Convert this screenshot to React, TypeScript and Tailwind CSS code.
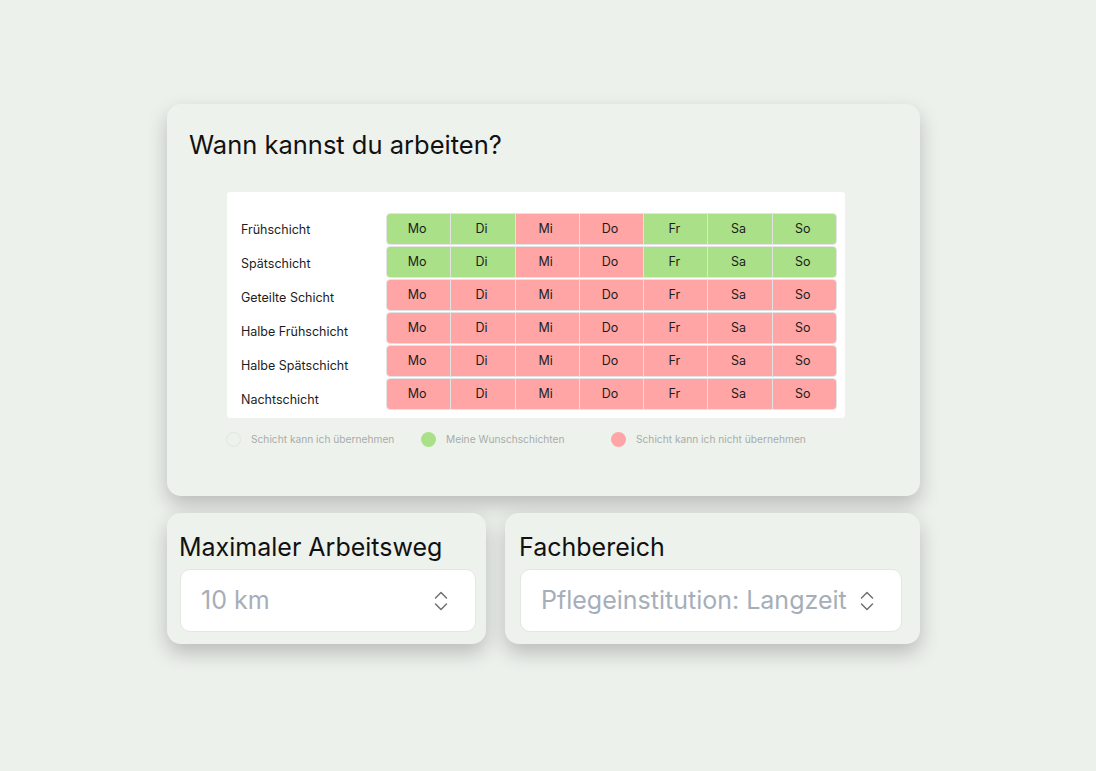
import React from "react";

type Cell = "yes" | "no";

const days = ["Mo", "Di", "Mi", "Do", "Fr", "Sa", "So"];

const shifts: { name: string; pattern: Cell[] }[] = [
  { name: "Frühschicht", pattern: ["yes", "yes", "no", "no", "yes", "yes", "yes"] },
  { name: "Spätschicht", pattern: ["yes", "yes", "no", "no", "yes", "yes", "yes"] },
  { name: "Geteilte Schicht", pattern: ["no", "no", "no", "no", "no", "no", "no"] },
  { name: "Halbe Frühschicht", pattern: ["no", "no", "no", "no", "no", "no", "no"] },
  { name: "Halbe Spätschicht", pattern: ["no", "no", "no", "no", "no", "no", "no"] },
  { name: "Nachtschicht", pattern: ["no", "no", "no", "no", "no", "no", "no"] },
];

function UpDown() {
  return (
    <svg width="14" height="20" viewBox="0 0 14 20" fill="none" stroke="#707070" strokeWidth="1.5" strokeLinecap="round" strokeLinejoin="round">
      <path d="M1.5 7 L7 1.5 L12.5 7" />
      <path d="M1.5 13 L7 18.5 L12.5 13" />
    </svg>
  );
}

function SelectBox({ value, className }: { value: string; className: string }) {
  return (
    <div className={`flex h-[63px] items-center justify-between rounded-[10px] border border-[#e3e7e2] bg-white pl-[20px] ${className}`}>
      <span className="text-[25px] leading-none text-[#a6aeb9]">{value}</span>
      <UpDown />
    </div>
  );
}

export default function App() {
  return (
    <div
      className="min-h-[771px] w-full bg-[#edf1ec] pl-[167px] pt-[104px]"
      style={{ fontFamily: "Inter, 'Noto Sans', sans-serif" }}
    >
      <div className="flex w-[753px] flex-col gap-[17px]">
        {/* availability card */}
        <div className="h-[392px] rounded-[14px] bg-[#eef2ed] pl-[22px] pt-[25px] shadow-[0_9px_20px_rgba(0,0,0,0.22)]">
          <h1 className="text-[25.5px] leading-[32px] text-[#111111]">Wann kannst du arbeiten?</h1>

          <div className="ml-[38px] mt-[31px] flex h-[226px] w-[618px] rounded-[3px] bg-white pl-[14px] pt-[21px]">
            <div className="flex w-[145px] flex-col">
              {shifts.map((s) => (
                <div key={s.name} className="flex h-[34px] items-center text-[12.5px] text-[#1d1d1d]">
                  {s.name}
                </div>
              ))}
            </div>
            <div className="flex w-[451px] flex-col gap-[1px]">
              {shifts.map((s) => (
                <div key={s.name} className="flex h-[32px] overflow-hidden rounded-[4px] border border-[#e4e4e4]">
                  {s.pattern.map((c, i) => (
                    <div
                      key={i}
                      className={`flex flex-1 items-center justify-center pr-[3px] pt-[1px] text-[12.5px] text-[#1d1d1d] ${
                        i > 0 ? "border-l border-[#e2e2e2]" : ""
                      } ${c === "yes" ? "bg-[#aae087]" : "bg-[#ffa5a5]"}`}
                    >
                      {days[i]}
                    </div>
                  ))}
                </div>
              ))}
            </div>
          </div>

          <div className="ml-[37px] mt-[14px] flex items-center text-[10.2px] text-[#a8acaa]">
            <div className="flex w-[195px] items-center gap-[10px]">
              <span className="h-[15px] w-[15px] rounded-full border border-[#e2e6e1]" />
              <span>Schicht kann ich übernehmen</span>
            </div>
            <div className="flex w-[190px] items-center gap-[10px]">
              <span className="h-[15px] w-[15px] rounded-full bg-[#aae087]" />
              <span>Meine Wunschschichten</span>
            </div>
            <div className="flex items-center gap-[10px]">
              <span className="h-[15px] w-[15px] rounded-full bg-[#ffa5a5]" />
              <span>Schicht kann ich nicht übernehmen</span>
            </div>
          </div>
        </div>

        {/* lower cards */}
        <div className="flex gap-[19px]">
          <div className="flex h-[131px] w-[319px] flex-col rounded-[14px] bg-[#eef2ed] pl-[12px] pr-[10px] pt-[19px] shadow-[0_9px_20px_rgba(0,0,0,0.22)]">
            <div className="text-[25px] leading-[30px] text-[#111111]">Maximaler Arbeitsweg</div>
            <SelectBox value="10 km" className="ml-[1px] mt-[7px] pr-[27px]" />
          </div>
          <div className="flex h-[131px] w-[415px] flex-col rounded-[14px] bg-[#eef2ed] pl-[14px] pr-[18px] pt-[19px] shadow-[0_9px_20px_rgba(0,0,0,0.22)]">
            <div className="text-[25px] leading-[30px] text-[#111111]">Fachbereich</div>
            <SelectBox value="Pflegeinstitution: Langzeit" className="ml-[1px] mt-[7px] pr-[27px]" />
          </div>
        </div>
      </div>
    </div>
  );
}
